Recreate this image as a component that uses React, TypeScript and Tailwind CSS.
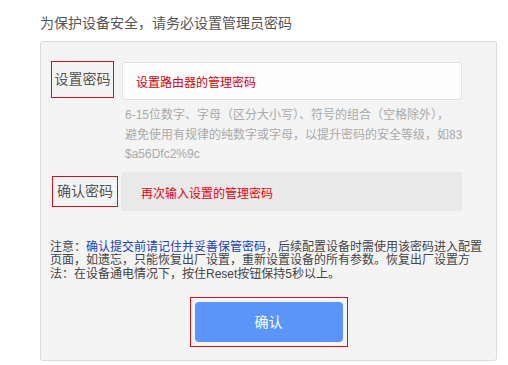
import React from "react";

export default function App() {
  return (
    <div className="w-[508px] h-[365px] bg-white pt-[13px] pl-[40px] font-['Liberation_Sans','Noto_Sans_CJK_SC',sans-serif] overflow-hidden">
      <div className="h-[20px] leading-[20px] text-[14px] text-[#555] whitespace-nowrap">
        为保护设备安全，请务必设置管理员密码
      </div>
      <div className="mt-[8px] w-[457px] h-[320px] border border-[#dcdcdc] rounded-[3px] bg-[#f4f4f4] flex flex-col">
        {/* Row 1 */}
        <div className="flex items-start pl-[10px] pt-[19px]">
          <div className="w-[63px] h-[37px] border border-[#c8141e] flex items-center justify-center text-[14px] text-[#555]">
            设置密码
          </div>
          <div className="ml-[8px] mt-[1px] w-[340px] h-[38px] border border-[#e2e2e2] bg-[#fdfdfd] rounded-[3px] flex items-center pl-[13px] pt-[4px] text-[12px] text-[#d40010]">
            设置路由器的管理密码
          </div>
        </div>
        <div className="ml-[84px] mt-[6px] text-[12px] leading-[19.5px] text-[#aaa] whitespace-nowrap">
          <div>6-15位数字、字母（区分大小写）、符号的组合（空格除外），</div>
          <div>避免使用有规律的纯数字或字母，以提升密码的安全等级，如83</div>
          <div>$a56Dfc2%9c</div>
        </div>
        {/* Row 2 */}
        <div className="flex items-center pl-[11px] mt-[7px]">
          <div className="w-[66px] h-[31px] border border-[#c8141e] flex items-center justify-center text-[14px] text-[#555]">
            确认密码
          </div>
          <div className="ml-[3px] w-[341px] h-[39px] bg-[#e9e9e9] rounded-[3px] flex items-center pl-[20px] pt-[6px] text-[12px] text-[#e60012]">
            再次输入设置的管理密码
          </div>
        </div>
        {/* Note */}
        <div className="ml-[9px] mt-[30px] text-[12px] leading-[13.5px] text-[#444] whitespace-nowrap">
          <div>
            注意：<span className="text-[#1a3fb5]">确认提交前请记住并妥善保管密码</span>，后续配置设备时需使用该密码进入配置
          </div>
          <div>页面，如遗忘，只能恢复出厂设置，重新设置设备的所有参数。恢复出厂设置方</div>
          <div>法：在设备通电情况下，按住Reset按钮保持5秒以上。</div>
        </div>
        {/* Button */}
        <div className="mt-[16px] flex justify-center">
          <div className="border border-[#c8141e] p-[4px]">
            <button className="w-[148px] h-[40px] rounded-[4px] bg-[#5b95f9] text-white text-[14px] flex items-center justify-center">
              确认
            </button>
          </div>
        </div>
      </div>
    </div>
  );
}
